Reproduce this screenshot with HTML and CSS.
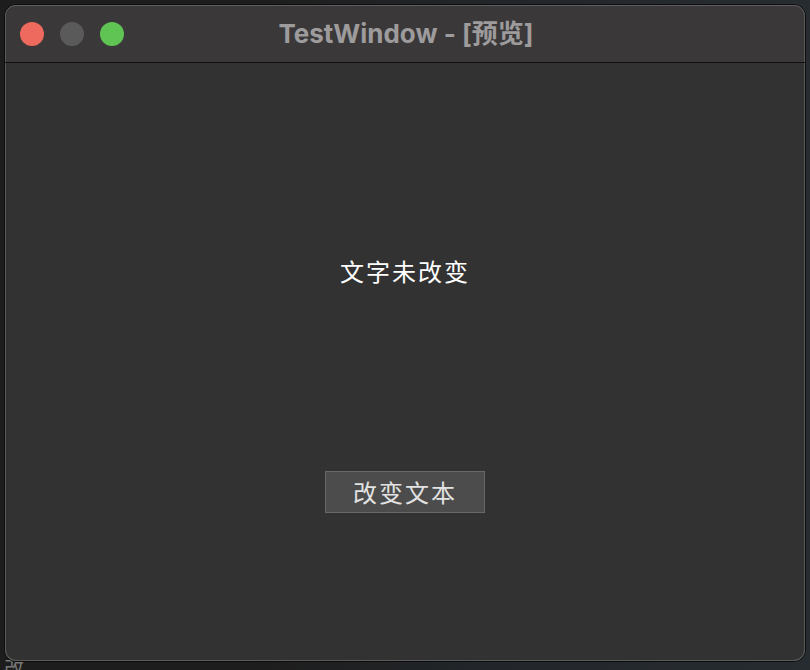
FILE: index.html
```html
<!DOCTYPE html>
<html lang="zh">
<head>
<meta charset="utf-8">
<title>TestWindow - [预览]</title>
<link rel="stylesheet" href="styles.css">
</head>
<body>
<div class="desktop">
  <span class="bg-glyph">改</span>
  <div class="window">
    <div class="titlebar">
      <div class="lights">
        <span class="light red"></span>
        <span class="light grey"></span>
        <span class="light green"></span>
      </div>
      <div class="title">TestWindow - [预览]</div>
    </div>
    <div class="content">
      <div class="label">文字未改变</div>
      <button class="btn">改变文本</button>
    </div>
  </div>
</div>
</body>
</html>
```

FILE: styles.css
```css
html, body {
  margin: 0;
  padding: 0;
  width: 810px;
  height: 670px;
  overflow: hidden;
}
body {
  background: linear-gradient(90deg, #1d1d1d 0%, #1d1d1d 32%, #22262a 60%, #272c31 100%);
  font-family: "Noto Sans", "Noto Sans CJK SC", sans-serif;
}
.desktop {
  position: relative;
  width: 810px;
  height: 670px;
  box-sizing: border-box;
  padding: 4px 4px 0 4px;
}
.bg-glyph {
  position: absolute;
  left: 4px;
  top: 658px;
  font-size: 20px;
  line-height: 20px;
  color: #777;
  font-family: "Noto Sans CJK SC", sans-serif;
}
.window {
  position: relative;
  width: 802px;
  height: 658px;
  box-sizing: border-box;
  border-radius: 12px;
  border: 1px solid #0d0d0d;
  box-shadow: inset 0 0 0 1px #5a5a5a;
  background: #323232;
  overflow: hidden;
  display: flex;
  flex-direction: column;
}
.titlebar {
  height: 57px;
  flex: none;
  background: #3a3839;
  border-bottom: 1px solid #101010;
  box-shadow: inset 0 1px 0 #5e5e5e, inset 1px 0 0 #5a5a5a, inset -1px 0 0 #5a5a5a;
  border-radius: 11px 11px 0 0;
  display: flex;
  align-items: center;
  position: relative;
}
.lights {
  display: flex;
  gap: 16px;
  padding-left: 15px;
  padding-top: 1px;
}
.light {
  width: 24px;
  height: 24px;
  border-radius: 50%;
  display: block;
}
.red { background: #ee6a5f; }
.grey { background: #5b5a5b; }
.green { background: #5fc454; }
.title {
  position: absolute;
  left: 0;
  right: 0;
  top: 0;
  bottom: 0;
  display: flex;
  align-items: center;
  justify-content: center;
  color: #9d9b9c;
  font-weight: 700;
  font-size: 26px;
  font-family: "Inter", "Noto Sans CJK SC", sans-serif;
  padding-left: 2px;
  padding-bottom: 5px;
}
.content {
  flex: 1;
  display: flex;
  flex-direction: column;
  align-items: center;
  box-shadow: inset 1px 0 0 #5a5a5a, inset -1px 0 0 #5a5a5a, inset 0 -1px 0 #5a5a5a;
  border-radius: 0 0 11px 11px;
}
.label {
  margin-top: 192px;
  height: 32px;
  line-height: 32px;
  font-size: 24px;
  color: #ffffff;
  font-family: "Noto Sans CJK SC", sans-serif;
  letter-spacing: 2px;
}
.btn {
  margin-top: 184px;
  width: 160px;
  height: 42px;
  box-sizing: border-box;
  background: #4c4c4c;
  border: 1px solid #686868;
  border-radius: 0;
  color: #e2e2e2;
  font-size: 24px;
  font-family: "Noto Sans CJK SC", sans-serif;
  letter-spacing: 2px;
  padding: 0;
  line-height: 38px;
}
```
